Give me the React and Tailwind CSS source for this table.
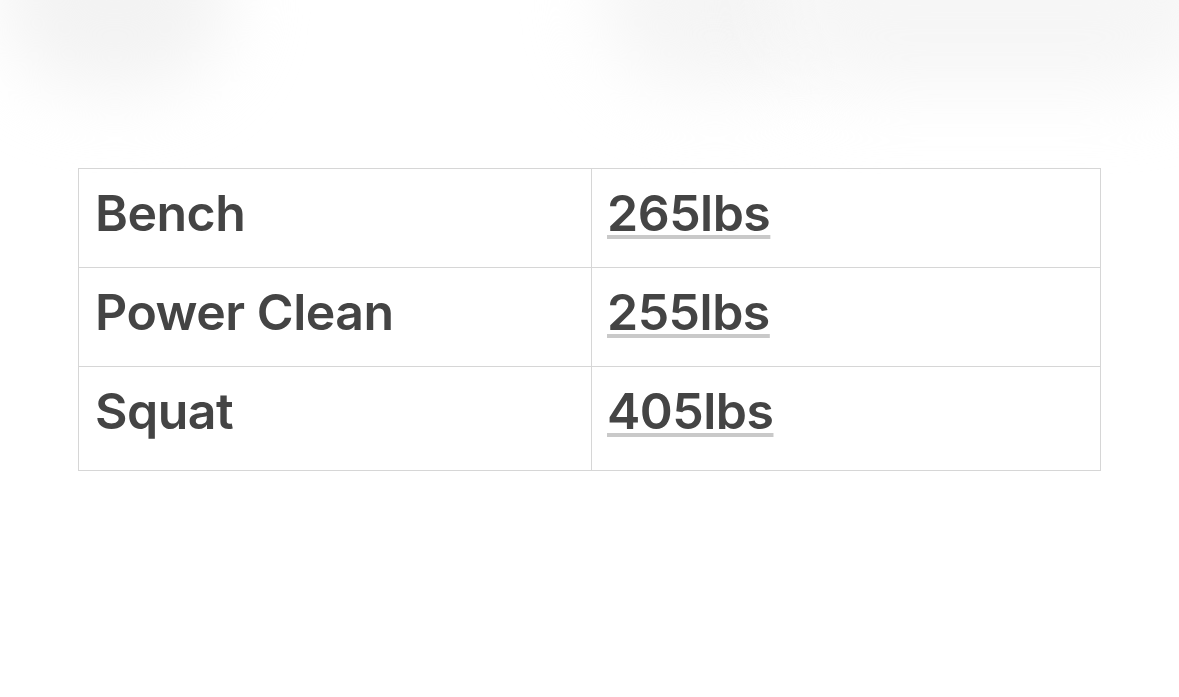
export default function App() {
  const rows = [
    { lift: "Bench", weight: "265lbs" },
    { lift: "Power Clean", weight: "255lbs" },
    { lift: "Squat", weight: "405lbs" },
  ];

  return (
    <div className="relative w-[1179px] h-[697px] bg-white overflow-hidden" style={{ fontFamily: "Inter, 'Liberation Sans', sans-serif" }}>
      {/* faint blurred shadows at the top edge */}
      <div className="absolute -top-[100px] left-[0px] w-[230px] h-[190px] rounded-full bg-[#f3f3f3] blur-[35px]" />
      <div className="absolute -top-[100px] left-[600px] w-[230px] h-[190px] rounded-full bg-[#f5f5f5] blur-[35px]" />
      <div className="absolute -top-[100px] left-[770px] w-[450px] h-[190px] rounded-[95px] bg-[#f6f6f6] blur-[35px]" />

      <div className="relative pt-[168px] pl-[78px]">
        <table className="w-[1023px] border-collapse border border-[#d6d6d6]">
          <tbody>
            {rows.map((r, i) => (
              <tr key={r.lift} className={i === 2 ? "h-[104px]" : "h-[99px]"}>
                <td className="w-[513px] border border-[#d6d6d6] pl-[16px] align-top pt-[14px] text-[50px] leading-[60px] font-semibold text-[#444] tracking-[-0.5px]">
                  {r.lift}
                </td>
                <td className="border border-[#d6d6d6] pl-[15px] align-top pt-[14px] text-[50px] leading-[60px] font-semibold text-[#444] tracking-[-0.5px]">
                  <a href="#" className="underline decoration-[#c9c9c9] decoration-[4px] underline-offset-[4px]">
                    {r.weight}
                  </a>
                </td>
              </tr>
            ))}
          </tbody>
        </table>
      </div>
    </div>
  );
}
